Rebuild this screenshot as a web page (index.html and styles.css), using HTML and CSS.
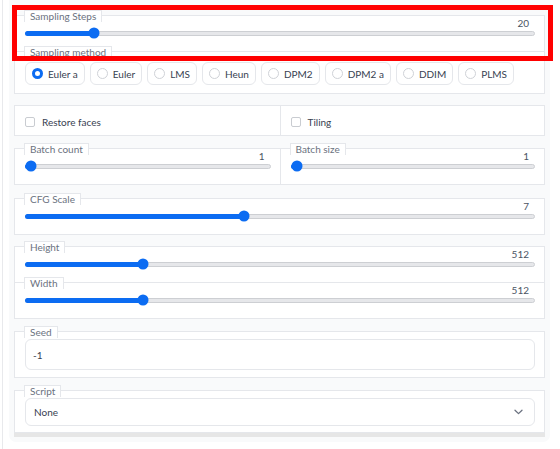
FILE: index.html
```html
<!DOCTYPE html>
<html>
<head>
<meta charset="utf-8">
<link rel="stylesheet" href="styles.css">
</head>
<body>
<div class="page">
  <div class="panel">
    <div class="group">
      <div class="blk sl">
        <div class="head"><span class="lbl">Sampling Steps</span><span class="val">20</span></div>
        <div class="area"><div class="track"><div class="fill" style="width:calc(5px + 0.1275 * (100% - 10px))"></div><div class="thumb" style="left:calc(5px + 0.1275 * (100% - 10px))"></div></div></div>
      </div>
      <div class="blk rb">
        <div class="head"><span class="lbl">Sampling method</span></div>
        <div class="pills">
          <div class="pill"><span class="radio on"></span>Euler a</div>
          <div class="pill"><span class="radio"></span>Euler</div>
          <div class="pill"><span class="radio"></span>LMS</div>
          <div class="pill"><span class="radio"></span>Heun</div>
          <div class="pill"><span class="radio"></span>DPM2</div>
          <div class="pill"><span class="radio"></span>DPM2 a</div>
          <div class="pill"><span class="radio"></span>DDIM</div>
          <div class="pill"><span class="radio"></span>PLMS</div>
        </div>
      </div>
    </div>

    <div class="group row2 g-check">
      <div class="cell chk"><span class="box"></span>Restore faces</div>
      <div class="cell chk"><span class="box"></span>Tiling</div>
    </div>

    <div class="group row2 g-batch">
      <div class="cell sl">
        <div class="head"><span class="lbl">Batch count</span><span class="val">1</span></div>
        <div class="area"><div class="track"><div class="fill" style="width:5px"></div><div class="thumb" style="left:5px"></div></div></div>
      </div>
      <div class="cell sl">
        <div class="head"><span class="lbl">Batch size</span><span class="val">1</span></div>
        <div class="area"><div class="track"><div class="fill" style="width:5px"></div><div class="thumb" style="left:5px"></div></div></div>
      </div>
    </div>

    <div class="group g-cfg">
      <div class="blk sl">
        <div class="head"><span class="lbl">CFG Scale</span><span class="val">7</span></div>
        <div class="area"><div class="track"><div class="fill" style="width:calc(5px + 0.4286 * (100% - 10px))"></div><div class="thumb" style="left:calc(5px + 0.4286 * (100% - 10px))"></div></div></div>
      </div>
    </div>

    <div class="group g-size">
      <div class="blk sl">
        <div class="head"><span class="lbl">Height</span><span class="val">512</span></div>
        <div class="area"><div class="track"><div class="fill" style="width:calc(5px + 0.2258 * (100% - 10px))"></div><div class="thumb" style="left:calc(5px + 0.2258 * (100% - 10px))"></div></div></div>
      </div>
      <div class="blk sl">
        <div class="head"><span class="lbl">Width</span><span class="val">512</span></div>
        <div class="area"><div class="track"><div class="fill" style="width:calc(5px + 0.2258 * (100% - 10px))"></div><div class="thumb" style="left:calc(5px + 0.2258 * (100% - 10px))"></div></div></div>
      </div>
    </div>

    <div class="group g-seed">
      <div class="blk fld">
        <div class="head"><span class="lbl">Seed</span></div>
        <div class="input">-1</div>
      </div>
    </div>

    <div class="group g-script">
      <div class="blk fld dd">
        <div class="head"><span class="lbl">Script</span></div>
        <div class="select"><span>None</span>
          <svg class="chev" width="9" height="6" viewBox="0 0 9 6"><path d="M1 1.2 L4.5 4.6 L8 1.2" fill="none" stroke="#6b7280" stroke-width="1.3" stroke-linecap="round" stroke-linejoin="round"/></svg>
        </div>
      </div>
    </div>
  </div>
  <div class="annot"></div>
</div>
</body>
</html>
```
FILE: styles.css
```css
* { box-sizing: border-box; }
html, body { margin: 0; padding: 0; background: #fff; }
body {
  width: 560px;
  height: 449px;
  overflow: hidden;
  font-family: "Lato", "Liberation Sans", sans-serif;
  font-size: 10px;
  color: #374151;
}
.page {
  position: relative;
  height: 449px;
  margin-left: 2px;
  border-left: 1px solid #e8e9ec;
  padding-left: 6px;
}
.panel {
  width: 541px;
  background: #f9fafb;
  padding: 15px 5px 5px 5px;
  border-radius: 0 0 7px 7px;
}
.group { background: #fff; }
.blk {
  border: 1px solid #e5e7eb;
  background: #fff;
  padding: 0 9px 0 10px;
}
.blk + .blk { margin-top: -1px; }
.row2 {
  display: grid;
  grid-template-columns: 1fr 1fr;
  border: 1px solid #e5e7eb;
}
.cell { padding-left: 10px; padding-right: 9px; }
.cell + .cell { border-left: 1px solid #e5e7eb; }

.head {
  display: flex;
  justify-content: space-between;
  align-items: flex-start;
  height: 14px;
  margin-top: -6px;
}
.lbl {
  display: inline-block;
  height: 12px;
  line-height: 11px;
  margin-left: -1px;
  padding: 0 5px;
  border: 1px solid #e5e7eb;
  border-bottom: 0;
  background: #fff;
  color: #6b7280;
  font-size: 10px;
  white-space: nowrap;
}
.val {
  margin-top: 7px;
  margin-right: 6px;
  line-height: 12px;
  height: 12px;
  color: #4b5563;
  font-size: 10px;
}
.sl { padding-bottom: 9px; }
.area {
  height: 18px;
  display: flex;
  align-items: center;
}
.track {
  position: relative;
  width: 100%;
  height: 5px;
  border: 1px solid #cdcfd3;
  border-radius: 3px;
  background: #e6e7ea;
}
.fill {
  position: absolute;
  left: -1px;
  top: -1px;
  bottom: -1px;
  background: #0c6cf2;
  border-radius: 3px 0 0 3px;
}
.thumb {
  position: absolute;
  top: 50%;
  width: 11px;
  height: 11px;
  border-radius: 50%;
  background: #0c6cf2;
  transform: translate(-50%, -50%);
}

.rb { padding-bottom: 8px; }
.pills {
  display: flex;
  gap: 5px;
  margin-top: 2px;
}
.pill {
  display: flex;
  align-items: center;
  gap: 5px;
  height: 23px;
  padding: 0 6px 0 6px;
  border: 1px solid #e5e7eb;
  border-radius: 6px;
  background: #fff;
  color: #374151;
  font-size: 10px;
  white-space: nowrap;
}
.radio {
  width: 11px;
  height: 11px;
  border-radius: 50%;
  border: 1px solid #cfd2d7;
  background: #fff;
  flex: none;
}
.radio.on {
  border: 3.5px solid #0c6cf2;
  background: #fff;
}

.g-check { margin-top: 11px; }
.chk {
  display: flex;
  align-items: flex-start;
  gap: 7px;
  padding-top: 11px;
  padding-bottom: 8px;
  height: 29px;
  line-height: 10px;
}
.box {
  width: 10px;
  height: 10px;
  border: 1px solid #c9ccd1;
  border-radius: 2px;
  background: #fff;
  flex: none;
}
.g-batch { margin-top: 12px; }
.g-cfg { margin-top: 13px; }
.g-size { margin-top: 11px; }
.g-seed { margin-top: 12px; }
.g-script {
  margin-top: 12px;
  border-bottom: 4px solid #e6e6e6;
}

.fld { padding-bottom: 7px; }
.input {
  margin-top: -1px;
  height: 31px;
  border: 1px solid #e5e7eb;
  border-radius: 6px;
  padding-left: 7px;
  display: flex;
  align-items: center;
  color: #374151;
  font-size: 10px;
}
.dd { padding-bottom: 6px; }
.select {
  margin-top: -1px;
  height: 28px;
  border: 1px solid #e5e7eb;
  border-radius: 6px;
  padding: 0 11px 0 8px;
  display: flex;
  align-items: center;
  justify-content: space-between;
  color: #374151;
  font-size: 10px;
}
.chev { display: block; }

.annot {
  position: absolute;
  left: 9px;
  top: 5px;
  width: 541px;
  height: 56px;
  border: 5px solid #ff0000;
  pointer-events: none;
}
```
